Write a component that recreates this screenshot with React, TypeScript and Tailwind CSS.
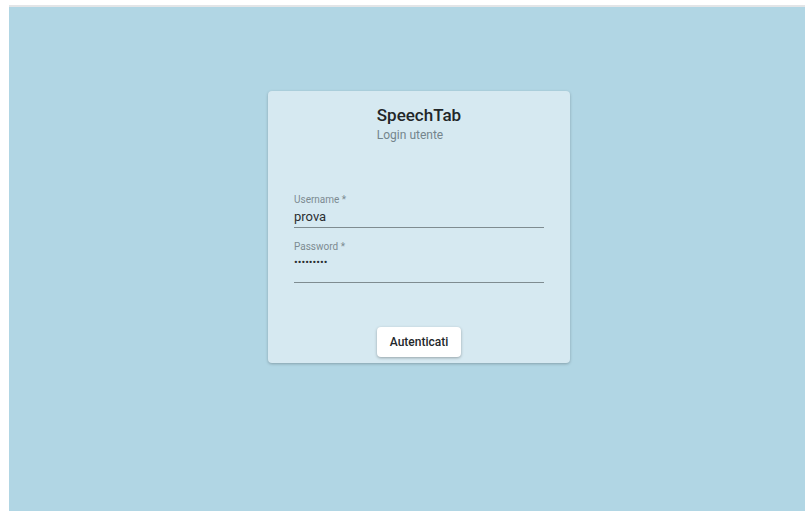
import React from 'react';

function UnderlineField({ label, value, secret }: { label: string; value: string; secret?: boolean }) {
  return (
    <label className="block">
      <span className="block text-[10px] leading-[12px] text-[#7d8b91]">{label} *</span>
      <input
        type={secret ? 'password' : 'text'}
        defaultValue={value}
        className={`block w-full border-b border-[#7f8c91] bg-transparent text-[#2b2f31] outline-none ${
          secret ? 'h-[30px] pb-[10px] text-[11px]' : 'h-[22px] text-[13px]'
        }`}
      />
    </label>
  );
}

export default function App() {
  return (
    <div className="h-[511px] w-[805px] overflow-hidden bg-white pt-[5px] pl-[9px] font-['Roboto',sans-serif]">
      <div className="h-[510px] border-t-2 border-[#e3e5e7] bg-[#b1d6e4] pt-[84px] pl-[259px]">
        <div className="flex h-[272px] w-[302px] flex-col rounded-[4px] bg-[#d6e9f1] shadow-[0_1px_3px_rgba(0,0,0,0.25)]">
          <div className="flex justify-center pt-[13px]">
            <div className="text-left">
              <div className="text-[17px] font-medium leading-[22px] text-[#222628]">SpeechTab</div>
              <div className="text-[12px] leading-[18px] text-[#74858c]">Login utente</div>
            </div>
          </div>

          <form className="mt-[50px] flex flex-col gap-[13px] px-[26px]">
            <UnderlineField label="Username" value="prova" />
            <UnderlineField label="Password" value="123456789" secret />
          </form>

          <div className="mt-auto flex justify-center pb-[6px]">
            <button
              type="button"
              className="h-[30px] w-[84px] rounded-[4px] bg-white text-[12px] font-medium text-[#23272a] shadow-[0_1px_3px_rgba(0,0,0,0.3)]"
            >
              Autenticati
            </button>
          </div>
        </div>
      </div>
    </div>
  );
}
